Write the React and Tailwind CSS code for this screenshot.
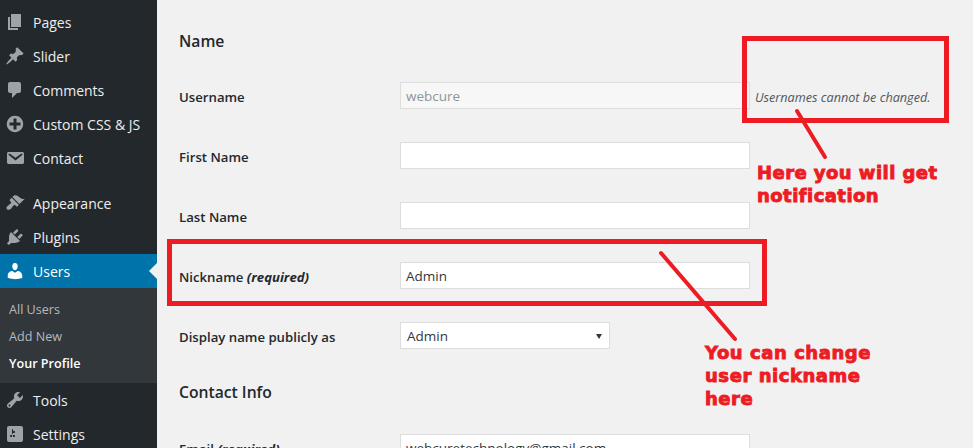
import React from 'react';

const font = 'font-["Open_Sans","Noto_Sans",sans-serif]';

const icons = {
  pages: 'M6 15V2h10v13H6zm-1 1h8v2H3V5h2v11z',
  pin: 'M10.44 3.02l1.82-1.82 6.36 6.35-1.83 1.82c-1.05-.68-2.48-.57-3.41.36l-.75.75c-.92.93-1.04 2.35-.35 3.41l-1.83 1.82-2.41-2.41-2.8 2.79c-.42.42-3.38 2.71-3.8 2.29s1.86-3.39 2.28-3.81l2.79-2.79L4.1 9.36l1.83-1.82c1.05.69 2.48.57 3.4-.36l.75-.75c.93-.92 1.05-2.35.36-3.41z',
  comments: 'M5 2h9c1.1 0 2 .9 2 2v7c0 1.1-.9 2-2 2h-2l-5 5v-5H5c-1.1 0-2-.9-2-2V4c0-1.1.9-2 2-2z',
  plus: 'M15.8 4.2c3.2 3.21 3.2 8.39 0 11.6-3.21 3.2-8.39 3.2-11.6 0C1 12.59 1 7.41 4.2 4.2 7.41 1 12.59 1 15.8 4.2zm-4.3 11.3v-4h4v-3h-4v-4h-3v4h-4v3h4v4h3z',
  email: 'M3.87 4h13.25C18.37 4 19 4.59 19 5.79v8.42c0 1.19-.63 1.79-1.88 1.79H3.87c-1.25 0-1.88-.6-1.88-1.79V5.79c0-1.2.63-1.79 1.88-1.79zm6.62 8.6l6.74-5.53c.24-.2.43-.66.13-1.07-.29-.41-.82-.42-1.17-.17l-5.7 3.86L4.8 5.83c-.35-.25-.88-.24-1.17.17-.3.41-.11.87.13 1.07z',
  brush: 'M14.48 11.06L7.41 3.99l1.5-1.5c.5-.56 2.3-.47 3.51.32 1.21.8 1.43 1.28 2.91 2.1 1.18.64 2.45 1.26 4.45.85zm-.71.71L6.7 4.7 4.93 6.47c-.39.39-.39 1.02 0 1.41l1.06 1.06c.39.39.39 1.03 0 1.42-.6.6-1.43 1.11-2.21 1.69-.35.26-.7.53-1.01.84C1.43 13.23.91 15.04 2 16.14c1.09 1.1 2.92.59 4.26-.75.33-.33.6-.67.85-1.02.58-.77 1.09-1.6 1.68-2.19.39-.39 1.03-.39 1.42 0l1.06 1.06c.39.39 1.02.39 1.41 0z',
  plugin: 'M13.11 4.36L9.87 7.6 8 5.73l3.24-3.24c.35-.34 1.05-.2 1.56.32.52.51.66 1.21.31 1.55zm-8 1.77l.91-1.12 9.01 9.01-1.19.84c-.71.71-2.63 1.16-3.82 1.16H6.14L4.9 17.26c-.59.59-1.54.59-2.12 0-.59-.58-.59-1.53 0-2.12l1.24-1.24v-3.88c0-1.13.4-3.19 1.09-3.89zm7.26 3.97l3.24-3.24c.34-.35 1.04-.21 1.55.31.52.51.66 1.21.31 1.55l-3.24 3.25z',
  users: 'M10 9.25c-2.27 0-2.73-3.44-2.73-3.44C7 4.02 7.82 2 9.97 2c2.16 0 2.98 2.02 2.71 3.81 0 0-.41 3.44-2.68 3.44zm0 2.57L12.72 10c2.39 0 4.52 2.33 4.52 4.53v2.49s-3.65 1.13-7.24 1.13c-3.65 0-7.24-1.13-7.24-1.13v-2.49c0-2.25 1.94-4.48 4.47-4.48z',
  tools: 'M16.68 9.77c-1.34 1.34-3.3 1.67-4.95.99l-5.41 6.52c-.99.99-2.59.99-3.58 0s-.99-2.59 0-3.57l6.52-5.42c-.68-1.65-.35-3.61.99-4.95 1.28-1.28 3.12-1.62 4.72-1.06l-2.89 2.89 2.82 2.82 2.86-2.87c.53 1.58.18 3.39-1.08 4.65zM3.81 16.21c.4.39 1.04.39 1.43 0 .4-.4.4-1.04 0-1.43-.39-.4-1.03-.4-1.43 0-.39.39-.39 1.03 0 1.43z',
  settings: 'M18 16V4c0-1.1-.9-2-2-2H4c-1.1 0-2 .9-2 2v12c0 1.1.9 2 2 2h12c1.1 0 2-.9 2-2zM8 11h1c.55 0 1 .45 1 1s-.45 1-1 1H8v1.5c0 .28-.22.5-.5.5s-.5-.22-.5-.5V13H6c-.55 0-1-.45-1-1s.45-1 1-1h1V5.5c0-.28.22-.5.5-.5s.5.22.5.5V7h1c.55 0 1 .45 1 1s-.45 1-1 1h-1v5.5c0 .28-.22.5-.5.5s-.5-.22-.5-.5V9z',
};

const MenuItem = ({ icon, label, active }) => (
  <div className={`relative flex h-[34px] items-center pl-[5px] text-[14px] ${active ? 'bg-[#0073aa] text-white' : 'text-[#eeeeee]'}`}>
    <svg viewBox="0 0 20 20" className={`h-5 w-5 ${active ? 'fill-white' : 'fill-[#9ea3a8]'}`}>
      <path d={icons[icon]} />
    </svg>
    <span className="ml-2">{label}</span>
    {active && (
      <span className="absolute right-0 top-[9px] h-0 w-0 border-y-[8px] border-r-[8px] border-y-transparent border-r-[#f1f1f1]" />
    )}
  </div>
);

const Row = ({ label, required, children }) => (
  <div className="flex h-[60px] items-center text-[#23282d]">
    <div className="w-[221px] pt-[5px] text-[13.2px] font-[560]">
      {label} {required && <em className="font-bold">(required)</em>}
    </div>
    {children}
  </div>
);

const Input = ({ value, disabled }) => (
  <div className={`flex h-[27px] w-[350px] items-center border border-[#dddddd] px-[5px] pt-[3px] text-[13.5px] ${disabled ? 'bg-[#f7f7f7] text-[#8f9498]' : 'bg-white text-[#32373c]'}`}>
    {value}
  </div>
);

export default function App() {
  return (
    <div className={`relative flex h-[448px] w-[973px] overflow-hidden bg-[#f1f1f1] ${font}`}>
      <aside className="w-[157px] shrink-0 bg-[#23282d] pt-[5px]">
        <MenuItem icon="pages" label="Pages" />
        <MenuItem icon="pin" label="Slider" />
        <MenuItem icon="comments" label="Comments" />
        <MenuItem icon="plus" label="Custom CSS & JS" />
        <MenuItem icon="email" label="Contact" />
        <div className="h-[11px]" />
        <MenuItem icon="brush" label="Appearance" />
        <MenuItem icon="plugin" label="Plugins" />
        <MenuItem icon="users" label="Users" active />
        <div className="bg-[#32373c] pt-[9px] pb-[6px] pl-[9px] text-[12.6px] text-[#b4b9be]">
          <div className="flex h-[27px] items-center">All Users</div>
          <div className="flex h-[27px] items-center">Add New</div>
          <div className="flex h-[26px] items-center font-semibold text-white">Your Profile</div>
        </div>
        <MenuItem icon="tools" label="Tools" />
        <MenuItem icon="settings" label="Settings" />
      </aside>

      <main className="flex-1 pl-[22px]">
        <h2 className="mt-[30px] mb-[13px] h-[22px] text-[15.7px] leading-[22px] font-semibold text-[#23282d]">Name</h2>
        <Row label="Username">
          <Input value="webcure" disabled />
          <span className="ml-[5px] pt-[5px] text-[12.65px] text-[#50575e] italic">Usernames cannot be changed.</span>
        </Row>
        <Row label="First Name"><Input value="" /></Row>
        <Row label="Last Name"><Input value="" /></Row>
        <Row label="Nickname" required><Input value="Admin" /></Row>
        <Row label="Display name publicly as">
          <div className="flex h-[27px] w-[210px] items-center justify-between border border-[#dddddd] bg-white pt-[3px] pr-[7px] pl-[6px] text-[13.5px] text-[#32373c]">
            Admin
            <span className="h-0 w-0 border-x-[3px] border-t-[5px] border-x-transparent border-t-[#32373c]" />
          </div>
        </Row>
        <h2 className="mt-[16px] mb-[14px] h-[22px] text-[15.7px] leading-[22px] font-semibold text-[#23282d]">Contact Info</h2>
        <Row label="Email" required><Input value="webcuretechnology@gmail.com" /></Row>
      </main>

      {/* red annotations drawn on top of the screenshot */}
      <div className="absolute top-[36px] left-[742px] h-[87px] w-[207px] border-[5px] border-[#ed1c24]" />
      <div className="absolute top-[239px] left-[167px] h-[67px] w-[600px] border-[5px] border-[#ed1c24]" />
      <svg className="pointer-events-none absolute top-0 left-0" width="973" height="448">
        <line x1="797" y1="111" x2="825" y2="157" stroke="#ed1c24" strokeWidth="4" strokeLinecap="round" />
        <line x1="661" y1="253" x2="735" y2="339" stroke="#ed1c24" strokeWidth="4" strokeLinecap="round" />
      </svg>
      <div className='absolute top-[161px] left-[757px] font-["DejaVu_Sans"] text-[18px] leading-[23px] font-bold tracking-[0.45px] text-[#ed1c24] [-webkit-text-stroke:0.9px_#ed1c24]'>
        Here you will get<br />notification
      </div>
      <div className='absolute top-[341px] left-[705px] font-["DejaVu_Sans"] text-[18px] leading-[23px] font-bold tracking-[0.55px] text-[#ed1c24] [-webkit-text-stroke:0.9px_#ed1c24]'>
        You can change<br />user nickname<br />here
      </div>
    </div>
  );
}
